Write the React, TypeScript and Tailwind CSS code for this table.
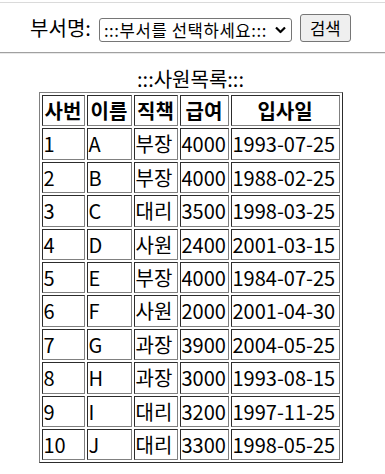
import React from 'react';

type Emp = { no: number; name: string; job: string; pay: number; hired: string };

const emps: Emp[] = [
  { no: 1, name: 'A', job: '부장', pay: 4000, hired: '1993-07-25' },
  { no: 2, name: 'B', job: '부장', pay: 4000, hired: '1988-02-25' },
  { no: 3, name: 'C', job: '대리', pay: 3500, hired: '1998-03-25' },
  { no: 4, name: 'D', job: '사원', pay: 2400, hired: '2001-03-15' },
  { no: 5, name: 'E', job: '부장', pay: 4000, hired: '1984-07-25' },
  { no: 6, name: 'F', job: '사원', pay: 2000, hired: '2001-04-30' },
  { no: 7, name: 'G', job: '과장', pay: 3900, hired: '2004-05-25' },
  { no: 8, name: 'H', job: '과장', pay: 3000, hired: '1993-08-15' },
  { no: 9, name: 'I', job: '대리', pay: 3200, hired: '1997-11-25' },
  { no: 10, name: 'J', job: '대리', pay: 3300, hired: '1998-05-25' },
];

// classic table[border=1] look: outset frame, inset cells
const cell =
  'whitespace-nowrap border border-[#808080] [border-style:inset] p-px text-[20px] leading-[27.4px]';

const App: React.FC = () => {
  return (
    <div className="min-h-screen bg-white text-black font-['Noto_Sans_CJK_KR',sans-serif]">
      <hr className="mt-[2px] border-[#dadada]" />

      <form
        className="flex h-[49px] w-[381px] items-center justify-center gap-2"
        onSubmit={(e) => e.preventDefault()}
      >
        <label htmlFor="dept" className="text-[20px] leading-[27px]">부서명:</label>
        <div className="relative mt-[4px]">
          <select
            id="dept"
            defaultValue=""
            className="h-[24px] w-[193px] appearance-none rounded-[3px] border border-[#767676] bg-white pl-[4px] text-[16.67px] leading-[20px] tracking-[0.6px] text-black"
          >
            <option value="">:::부서를 선택하세요:::</option>
            <option value="10">영업부</option>
            <option value="20">개발부</option>
          </select>
          <svg
            className="pointer-events-none absolute right-[6px] top-1/2 -translate-y-1/2"
            width="11"
            height="7"
            viewBox="0 0 11 7"
            fill="none"
            stroke="#000"
            strokeWidth="2.2"
          >
            <path d="M1 1l4.5 4.5L10 1" />
          </svg>
        </div>
        <button
          type="submit"
          className="mt-px h-[28px] w-[51px] rounded-[3px] border border-[#767676] bg-[#efefef] text-[16.67px] leading-[20px]"
        >
          검색
        </button>
      </form>

      <hr className="border-t border-b border-t-[#a0a0a0] border-b-[#e8e8e8]" />

      <div className="mt-[11px] w-[381px]">
        <table className="mx-auto border-separate border-spacing-[2px] border border-[#808080] [border-style:outset]">
          <caption className="text-center text-[20px] leading-[27px]">:::사원목록:::</caption>
          <thead>
            <tr>
              <th className={`${cell} w-[43px] text-center font-bold`}>사번</th>
              <th className={`${cell} w-[45px] text-center font-bold`}>이름</th>
              <th className={`${cell} w-[44px] text-center font-bold`}>직책</th>
              <th className={`${cell} w-[49px] text-center font-bold`}>급여</th>
              <th className={`${cell} w-[109px] text-center font-bold`}>입사일</th>
            </tr>
          </thead>
          <tbody>
            {emps.map((emp) => (
              <tr key={emp.no}>
                <td className={cell}>{emp.no}</td>
                <td className={cell}>{emp.name}</td>
                <td className={cell}>{emp.job}</td>
                <td className={cell}>{emp.pay}</td>
                <td className={cell}>{emp.hired}</td>
              </tr>
            ))}
          </tbody>
        </table>
      </div>
    </div>
  );
};

export default App;
